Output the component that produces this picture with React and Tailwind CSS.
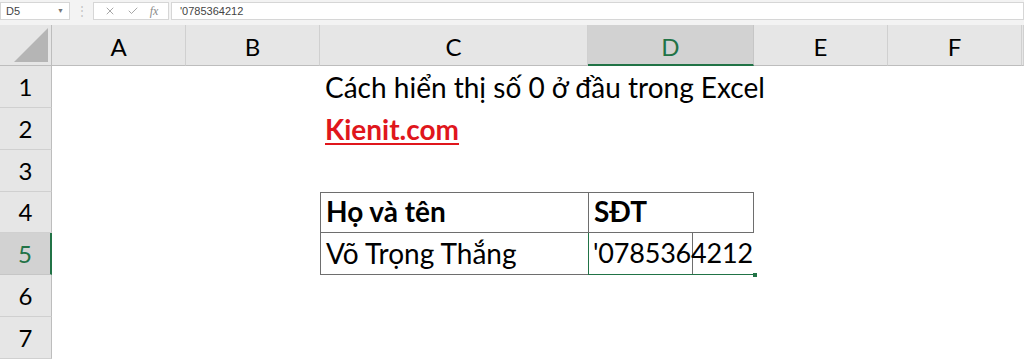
import React from 'react';
import { X, Check } from 'lucide-react';

const cols = ['A', 'B', 'C', 'D', 'E', 'F', ''];
const rows = [1, 2, 3, 4, 5, 6, 7];

const FormulaBar = () => (
  <div className="flex h-[25px] items-start bg-[#f3f3f3] pt-[2px] font-['Liberation_Sans',sans-serif] text-[11px] text-[#444]">
    <div className="flex h-[18px] w-[70px] items-center justify-between border border-[#d6d6d6] bg-white pl-[5px] pr-[5px]">
      <span>D5</span>
      <span className="text-[7px] text-[#777]">▼</span>
    </div>
    <div className="flex w-[23px] justify-center text-[12px] leading-[18px] text-[#c4c4c4]">⋮</div>
    <div className="flex h-[18px] w-[76px] items-center justify-around border border-[#d6d6d6] bg-white px-[4px] text-[#8a8a8a]">
      <X size={12} strokeWidth={1.5} />
      <Check size={12} strokeWidth={1.5} />
      <span className="font-['Liberation_Serif',serif] text-[12px] italic">fx</span>
    </div>
    <div className="ml-[2px] flex h-[18px] flex-1 items-center border border-[#d6d6d6] bg-white pl-[8px]">
      '0785364212
    </div>
  </div>
);

const ColHeader = ({ label }) => {
  const sel = label === 'D';
  return (
    <div
      className={
        sel
          ? 'flex items-center justify-center border-r border-b-2 border-r-[#c6c6c6] border-b-[#217346] bg-[#d2d2d2] pt-[4px] text-[#217346]'
          : 'flex items-center justify-center border-r border-b border-r-[#d0d0d0] border-b-[#bdbdbd] bg-[#e6e6e6] pt-[4px] text-black'
      }
    >
      {label}
    </div>
  );
};

const RowHeader = ({ n }) => {
  const sel = n === 5;
  return (
    <div
      className={
        sel
          ? 'flex items-center justify-center border-b border-r-2 border-b-[#c6c6c6] border-r-[#217346] bg-[#d2d2d2] text-[#217346]'
          : 'flex items-center justify-center border-b border-r border-b-[#d0d0d0] border-r-[#bdbdbd] bg-[#e6e6e6] text-black'
      }
    >
      {n}
    </div>
  );
};

const Cell = ({ children, className = '' }) => (
  <div className={`flex items-end whitespace-nowrap px-[5px] pb-[5px] leading-[32px] ${className}`}>{children}</div>
);

const App = () => {
  return (
    <div className="h-[359px] w-[1024px] overflow-hidden bg-white">
      <FormulaBar />
      <div className="grid grid-cols-[52px_134px_134px_268px_166px_134px_134px_2px] grid-rows-[41px_42px_42px_42px_41px_42px_42px_42px] font-['Lato','Noto_Sans',sans-serif] text-[24px]">
        <div className="relative border-r border-b border-r-[#bdbdbd] border-b-[#bdbdbd] bg-[#e6e6e6]">
          <svg className="absolute right-[3px] bottom-[3px]" width="34" height="34" viewBox="0 0 34 34">
            <polygon points="34,0 34,34 0,34" fill="#b5b5b5" />
          </svg>
        </div>
        {cols.map((c, i) => (
          <ColHeader key={i} label={c} />
        ))}

        {rows.map((n) => (
          <React.Fragment key={n}>
            <RowHeader n={n} />
            <Cell />
            <Cell />
            {n === 1 && (
              <Cell className="text-[28px] text-black">Cách hiển thị số 0 ở đầu trong Excel</Cell>
            )}
            {n === 2 && (
              <Cell className="text-[28px] font-bold text-[#e0161c] underline decoration-[2px] underline-offset-[3px]">
                Kienit.com
              </Cell>
            )}
            {n === 3 && <Cell />}
            {n === 4 && (
              <Cell className="border-t border-l border-b border-[#6e6e6e] text-[28px] font-bold text-black">Họ và tên</Cell>
            )}
            {n === 5 && (
              <Cell className="border-l border-b border-[#6e6e6e] text-[28px] text-black">Võ Trọng Thắng</Cell>
            )}
            {n > 5 && <Cell />}
            {n === 4 && (
              <Cell className="border border-[#6e6e6e] text-[28px] font-bold text-black">SĐT</Cell>
            )}
            {n === 5 && (
              <div className="relative flex items-end whitespace-nowrap border-l border-b border-l-[#217346] border-b-[#217346] pl-[4px] pb-[5px] text-[27px] leading-[32px] tracking-[-0.2px] text-black">
                <div className="absolute top-0 bottom-0 left-[103px] w-px bg-[#6e6e6e]" />
                <span className="relative">'0785364212</span>
                <div className="absolute right-[-3px] bottom-[-3px] h-[4px] w-[4px] bg-[#217346]" />
              </div>
            )}
            {n !== 4 && n !== 5 && <Cell />}
            <Cell />
            <Cell />
            <Cell />
          </React.Fragment>
        ))}
      </div>
    </div>
  );
};

export default App;
